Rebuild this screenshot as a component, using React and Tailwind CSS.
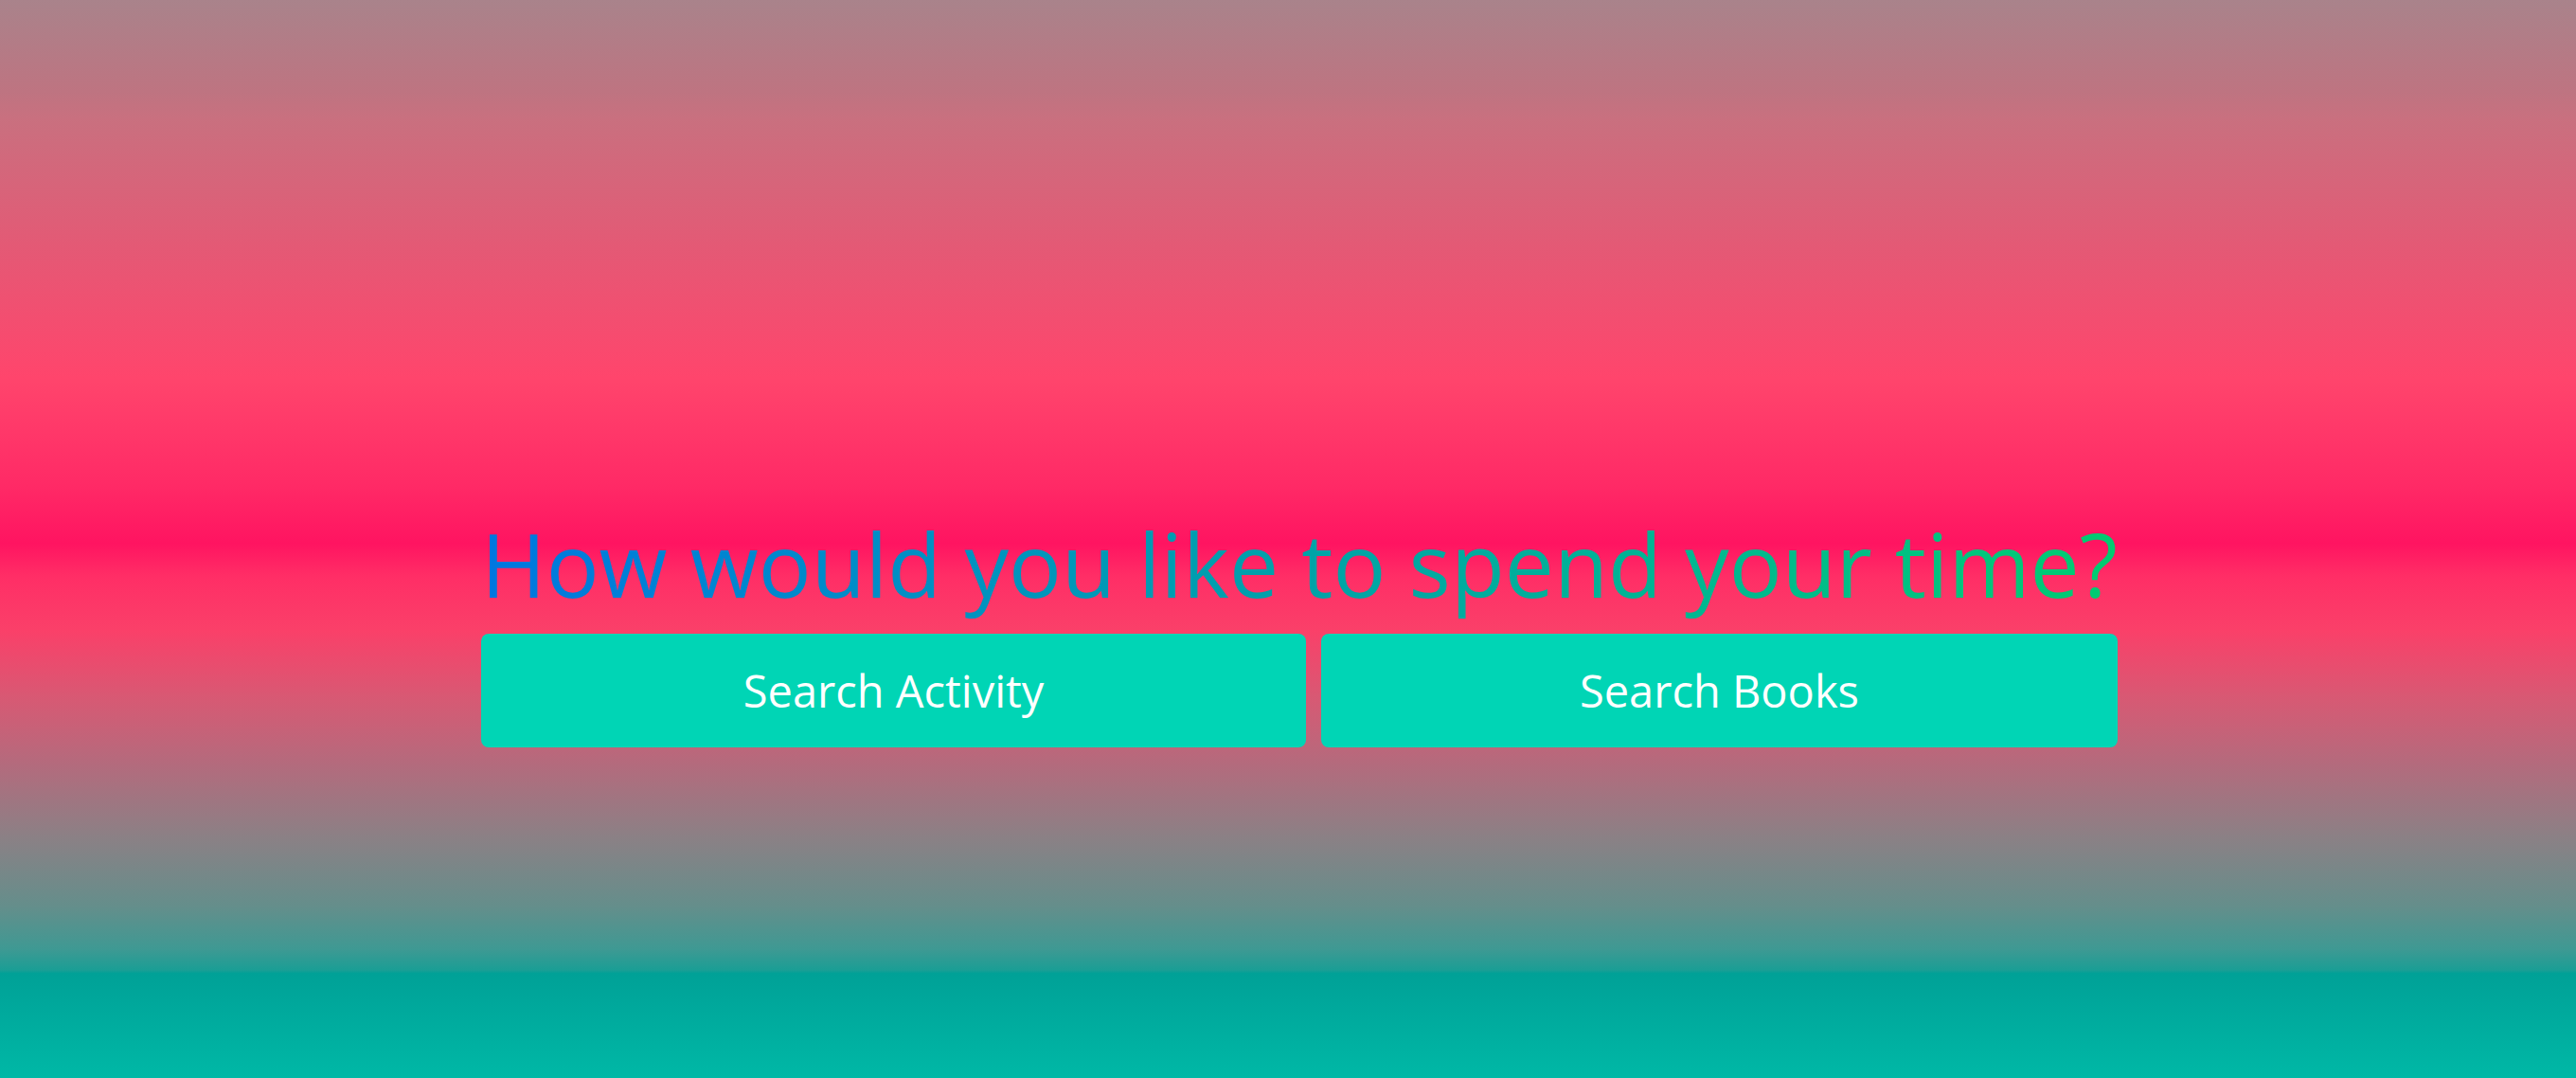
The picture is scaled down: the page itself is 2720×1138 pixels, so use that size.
export default function App() {
  return (
    <main className="flex min-h-screen flex-col items-center justify-center bg-[linear-gradient(to_bottom,#a9838b_0%,#be7481_8.5%,#c9707f_11%,#e45975_23%,#ff456c_35%,#ff2a66_45%,#ff1461_50.4%,#ff2e66_53.5%,#fa4069_58.5%,#d65a74_65%,#b36b7d_71%,#8c8085_77.5%,#658e8b_84%,#3f9993_88%,#1a9e95_90%,#00a197_90.3%,#00b8a6_100%)] pt-[188px] pl-6 font-['Open_Sans',sans-serif]">
      <div className="flex flex-col">
        <h1 className="bg-linear-to-r from-[#0076e0] via-[#00a2a8] to-[#00cc70] bg-clip-text pt-0.5 pb-[18px] text-[93px] leading-[112px] text-transparent">How would you like to spend your time?</h1>
        <div className="flex gap-4">
          <button className="h-[120px] flex-[29] rounded-lg bg-[#00d5b5] text-[47px] text-white">Search Activity</button>
          <button className="h-[120px] flex-[28] rounded-lg bg-[#00d5b5] text-[47px] text-white">Search Books</button>
        </div>
      </div>
    </main>
  );
}
